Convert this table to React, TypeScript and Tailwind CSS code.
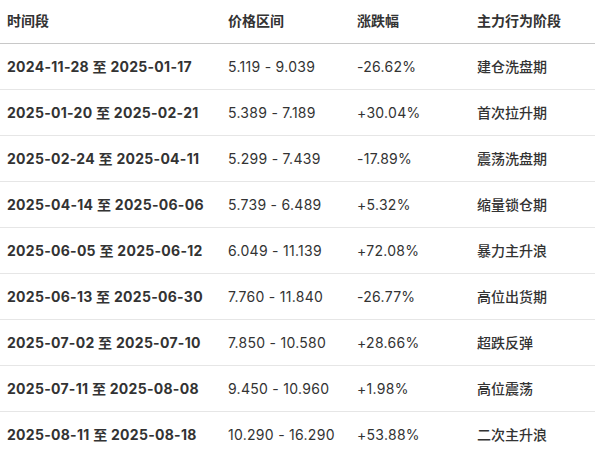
const ROWS = [
  ["2024-11-28 至 2025-01-17", "5.119 - 9.039", "-26.62%", "建仓洗盘期"],
  ["2025-01-20 至 2025-02-21", "5.389 - 7.189", "+30.04%", "首次拉升期"],
  ["2025-02-24 至 2025-04-11", "5.299 - 7.439", "-17.89%", "震荡洗盘期"],
  ["2025-04-14 至 2025-06-06", "5.739 - 6.489", "+5.32%", "缩量锁仓期"],
  ["2025-06-05 至 2025-06-12", "6.049 - 11.139", "+72.08%", "暴力主升浪"],
  ["2025-06-13 至 2025-06-30", "7.760 - 11.840", "-26.77%", "高位出货期"],
  ["2025-07-02 至 2025-07-10", "7.850 - 10.580", "+28.66%", "超跌反弹"],
  ["2025-07-11 至 2025-08-08", "9.450 - 10.960", "+1.98%", "高位震荡"],
  ["2025-08-11 至 2025-08-18", "10.290 - 16.290", "+53.88%", "二次主升浪"],
];

export default function App() {
  return (
    <div
      className="w-[595px] h-[455px] overflow-hidden bg-white text-[#333] text-[14px]"
      style={{ fontFamily: 'Inter, "Noto Sans CJK SC", sans-serif' }}
    >
      <div className="grid grid-cols-[221px_129px_120px_1fr] h-[44px] items-center border-b border-[#c8c8c8] font-semibold pb-[3px]">
        <div className="pl-[7px]">时间段</div>
        <div className="pl-[7px]">价格区间</div>
        <div className="pl-[7px]">涨跌幅</div>
        <div className="pl-[7px]">主力行为阶段</div>
      </div>
      {ROWS.map((r) => (
        <div
          key={r[0]}
          className="grid grid-cols-[221px_129px_120px_1fr] h-[46px] items-center border-b border-[#e6e6e6]"
        >
          <div className="pl-[7px] font-bold tracking-[0.02em]">{r[0]}</div>
          <div className="pl-[7px] tracking-[0.02em]">{r[1]}</div>
          <div className="pl-[7px] tracking-[0.02em]">{r[2]}</div>
          <div className="pl-[7px] font-medium">{r[3]}</div>
        </div>
      ))}
    </div>
  );
}
